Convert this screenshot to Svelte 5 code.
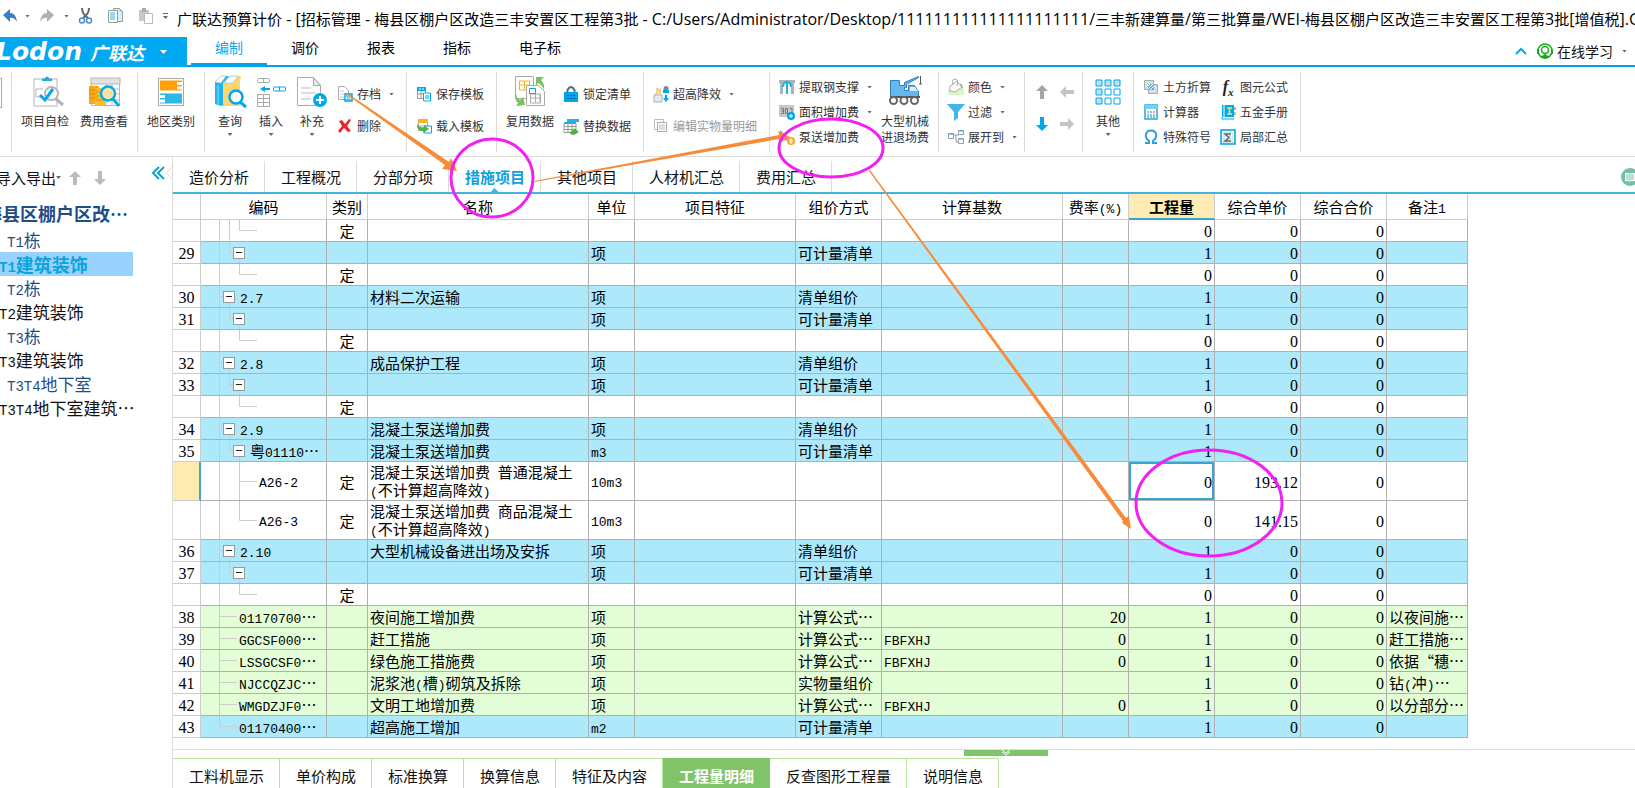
<script lang="ts">
	type Kind = 'white' | 'blue' | 'green';
	type Tree = 'section' | 'item' | 'leaf' | 'leafMore' | 'leafDeep' | 'flat' | 'flatEnd';

	interface Row {
		no?: number;
		tree: Tree;
		kind: Kind;
		cells: string[];
		tall?: boolean;
		current?: boolean;
	}

	const columns = [
		{ title: '', width: 28 },
		{ title: '编码', width: 126 },
		{ title: '类别', width: 41 },
		{ title: '名称', width: 221 },
		{ title: '单位', width: 46 },
		{ title: '项目特征', width: 161 },
		{ title: '组价方式', width: 86 },
		{ title: '计算基数', width: 181 },
		{ title: '费率(%)', width: 66 },
		{ title: '工程量', width: 86 },
		{ title: '综合单价', width: 86 },
		{ title: '综合合价', width: 86 },
		{ title: '备注1', width: 81 }
	];

	// code, type, name, unit, feature, method, base, rate, quantity, price, total, note
	const empty = ['', '定', '', '', '', '', '', '', '0', '0', '0', ''];
	const measured = ['', '', '', '项', '', '可计量清单', '', '', '1', '0', '0', ''];

	function section(code: string, name: string) {
		return [code, '', name, '项', '', '清单组价', '', '', '1', '0', '0', ''];
	}

	const rows: Row[] = [
		{ tree: 'leafDeep', kind: 'white', cells: empty },
		{ no: 29, tree: 'item', kind: 'blue', cells: measured },
		{ tree: 'leaf', kind: 'white', cells: empty },
		{ no: 30, tree: 'section', kind: 'blue', cells: section('2.7', '材料二次运输') },
		{ no: 31, tree: 'item', kind: 'blue', cells: measured },
		{ tree: 'leaf', kind: 'white', cells: empty },
		{ no: 32, tree: 'section', kind: 'blue', cells: section('2.8', '成品保护工程') },
		{ no: 33, tree: 'item', kind: 'blue', cells: measured },
		{ tree: 'leaf', kind: 'white', cells: empty },
		{ no: 34, tree: 'section', kind: 'blue', cells: section('2.9', '混凝土泵送增加费') },
		{
			no: 35,
			tree: 'item',
			kind: 'blue',
			cells: ['粤01110…', '', '混凝土泵送增加费', 'm3', '', '可计量清单', '', '', '1', '0', '0', '']
		},
		{
			tree: 'leafMore',
			kind: 'white',
			tall: true,
			current: true,
			cells: ['A26-2', '定', '混凝土泵送增加费 普通混凝土(不计算超高降效)', '10m3', '', '', '', '', '0', '193.12', '0', '']
		},
		{
			tree: 'leaf',
			kind: 'white',
			tall: true,
			cells: ['A26-3', '定', '混凝土泵送增加费 商品混凝土(不计算超高降效)', '10m3', '', '', '', '', '0', '141.15', '0', '']
		},
		{ no: 36, tree: 'section', kind: 'blue', cells: section('2.10', '大型机械设备进出场及安拆') },
		{ no: 37, tree: 'item', kind: 'blue', cells: measured },
		{ tree: 'leaf', kind: 'white', cells: empty },
		{
			no: 38,
			tree: 'flat',
			kind: 'green',
			cells: ['01170700…', '', '夜间施工增加费', '项', '', '计算公式…', '', '20', '1', '0', '0', '以夜间施…']
		},
		{
			no: 39,
			tree: 'flat',
			kind: 'green',
			cells: ['GGCSF000…', '', '赶工措施', '项', '', '计算公式…', 'FBFXHJ', '0', '1', '0', '0', '赶工措施…']
		},
		{
			no: 40,
			tree: 'flat',
			kind: 'green',
			cells: ['LSSGCSF0…', '', '绿色施工措施费', '项', '', '计算公式…', 'FBFXHJ', '0', '1', '0', '0', '依据“穗…']
		},
		{
			no: 41,
			tree: 'flat',
			kind: 'green',
			cells: ['NJCCQZJC…', '', '泥浆池(槽)砌筑及拆除', '项', '', '实物量组价', '', '', '1', '0', '0', '钻(冲)…']
		},
		{
			no: 42,
			tree: 'flat',
			kind: 'green',
			cells: ['WMGDZJF0…', '', '文明工地增加费', '项', '', '计算公式…', 'FBFXHJ', '0', '1', '0', '0', '以分部分…']
		},
		{
			no: 43,
			tree: 'flatEnd',
			kind: 'blue',
			cells: ['01170400…', '', '超高施工增加', 'm2', '', '可计量清单', '', '', '1', '0', '0', '']
		}
	];

	const title =
		'广联达预算计价 - [招标管理 - 梅县区棚户区改造三丰安置区工程第3批 - C:/Users/Administrator/Desktop/111111111111111111111/三丰新建算量/第三批算量/WEI-梅县区棚户区改造三丰安置区工程第3批[增值税].GB';
	const menu = ['编制', '调价', '报表', '指标', '电子标'];
	const views = ['造价分析', '工程概况', '分部分项', '措施项目', '其他项目', '人材机汇总', '费用汇总'];
	const details = ['工料机显示', '单价构成', '标准换算', '换算信息', '特征及内容', '工程量明细', '反查图形工程量', '说明信息'];
	const projects = [
		{ name: 'T1栋', building: true },
		{ name: 'T1建筑装饰', building: false },
		{ name: 'T2栋', building: true },
		{ name: 'T2建筑装饰', building: false },
		{ name: 'T3栋', building: true },
		{ name: 'T3建筑装饰', building: false },
		{ name: 'T3T4地下室', building: true },
		{ name: 'T3T4地下室建筑…', building: false }
	];

	let activeMenu = $state('编制');
	let activeView = $state('措施项目');
	let activeDetail = $state('工程量明细');
	let activeProject = $state('T1建筑装饰');

	// Splits a string in ASCII and Chinese runs, each with its own font
	function runs(text: string) {
		return text.match(/[\x20-\x7e]+|[^\x20-\x7e]+/g) ?? [];
	}

	function treePath(tree: Tree, height: number) {
		const mid = Math.floor(height / 2) + 0.5;
		const trunk = `M18.5 0V${height}`;
		switch (tree) {
			case 'section':
				return `${trunk}M18.5 ${mid}H22M28.5 ${mid}V${height}`;
			case 'item':
				return `${trunk}M28.5 0V${mid}H32M38.5 ${mid}V${height}`;
			case 'leaf':
				return `${trunk}M38.5 0V${mid}H56`;
			case 'leafMore':
				return `${trunk}M38.5 0V${height}M38.5 ${mid}H56`;
			case 'leafDeep':
				return `${trunk}M28.5 0V${height}M38.5 0V${mid}H56`;
			case 'flat':
				return `${trunk}M18.5 ${mid}H36`;
			default:
				return `M18.5 0V${mid}H36`;
		}
	}

	// 32px toolbar drawings
	const bigIcons: Record<string, string> = {
		check: `<rect x="5" y="4" width="23" height="27" fill="#fff" stroke="#b5b5b5"/><path d="M13 6V3.500h3a2 2 0 0 1 4 0h3V6z" fill="#2aa9df"/><path d="M14 14H7v8h5" fill="none" stroke="#b5b5b5"/><circle cx="22.500" cy="18.500" r="6.500" fill="#fff" stroke="#b5b5b5" stroke-width="2"/><path d="M27 24l7 6" stroke="#b5b5b5" stroke-width="3"/><path d="M11 20l5 5 8-11" fill="none" stroke="#00a8ec" stroke-width="3"/>`,
		fee: `<path d="M3.500 3.500h28v27h-28zM3.500 14h28M3.500 19h28M3.500 25h28M18 9v21M24 9v21" fill="#fff" stroke="#b8b8b8"/><rect x="3" y="3" width="29" height="6" fill="#e2e2e2" stroke="#b8b8b8"/><path d="M1 11h10v18H1z" fill="#f9a617"/><path d="M7 13h11v17H7z" fill="#fdbe33"/><path d="M1 15h8M1 19h8M1 23h8M8 17h10M8 21h10M8 25h10" stroke="#e48c00"/><circle cx="20" cy="18.500" r="7" fill="#fde3a1" stroke="#00adef" stroke-width="2.500"/><path d="M25 24l6 7" stroke="#00adef" stroke-width="3"/>`,
		region: `<rect x="3.500" y="3.500" width="25" height="27" fill="#fff" stroke="#aaa"/><path d="M5 5.500h22v10H5z" fill="#ff9f0a"/><path d="M5 18.500h22v10H5z" fill="#2cb7e5"/><path d="M22 7h5v3h-5zM22 11.500h5v3h-5zM5 20h5v3H5zM5 24.500h5v3H5z" fill="#fff"/>`,
		query: `<path d="M1 7l6-6h8l-4 6v23q-5 2-10-1z" fill="#1eb5e8"/><path d="M9 8l7-7h11l-1 6v24H12q-3 0-3-3z" fill="#fcd670"/><path d="M1 7l6-6h5L7 8zM10 8l6-7h8l-5 7z" fill="#fff" stroke="#b8cbd0"/><path d="M4 10v20" stroke="#8fe0f7"/><circle cx="22" cy="22" r="6.500" fill="#fff" stroke="#00a9ee" stroke-width="2.500"/><path d="M26 27l6 5" stroke="#00a9ee" stroke-width="3"/>`,
		insert: `<g fill="#fff" stroke="#aaa"><rect x="2.500" y="3.500" width="12" height="4" rx="1"/><path d="M8.500 4v4M2.500 19.500h12v12h-12zM2.500 23.500h12M2.500 27.500h12M8.500 19.500v12"/></g><path d="M5 14l5-3v2h5v2h-5v2z" fill="#00a8ec"/><rect x="18.500" y="12" width="12" height="4" rx="1" fill="#fff" stroke="#00a8ec"/><path d="M24.500 12v4" stroke="#00a8ec"/>`,
		add: `<path d="M1.500 2.500h16l7 8v20h-23z" fill="#fff" stroke="#aaa"/><path d="M17.500 2.500v8h7z" fill="#e9e9e9" stroke="#aaa"/><path d="M5 13h10M5 18h15M5 24h10" stroke="#ddd" stroke-width="2"/><circle cx="24" cy="25" r="7" fill="#00a9ee"/><path d="M20 25h8M24 21v8" stroke="#fff" stroke-width="2"/>`,
		reuse: `<path d="M1.500 1.500h18v22h-18z" fill="#fff" stroke="#aaa"/><path d="M5.500 6h10v9h-10zM5.500 10h10M10.500 6v9" fill="#fff" stroke="#f5b22c"/><path d="M12.500 10.500h12l6 6v14h-18z" fill="#fff" stroke="#aaa"/><path d="M16.500 19h10v9h-10zM16.500 23h10M21.500 15v13M26 19v9" fill="none" stroke="#aaa"/><path d="M15.500 13.500h6v5h-6z" fill="none" stroke="#00a8ec"/><path d="M22 2h8l-3 3q4 4 3 10-2-5-6-7l-2 3z" fill="#7bbf67"/><path d="M2 18q0 5 4 7l3-3 2 8-9 1 2-3q-4-3-2-10z" fill="#7bbf67"/>`,
		crane: `<path d="M1.500 5.500h9v5h5v-3l14-6v1l-12 7v3h-2v3h4v-5h6l4 6v5h-28z" fill="#66b8f0" stroke="#337fb9"/><path d="M31.500 1v8M30 9h3" stroke="#555" fill="none"/><path d="M21 12h5l3 4h-8z" fill="#d8effd"/><path d="M1 22h30" stroke="#555" stroke-width="2"/><g fill="#fff" stroke="#666" stroke-width="2"><circle cx="4.500" cy="25.500" r="3.500"/><circle cx="15" cy="25.500" r="3.500"/><circle cx="25.500" cy="25.500" r="3.500"/></g>`,
		others: `<g fill="#bfe0f2" stroke="#00a9ee"><path d="M4 5h6v6H4zM13 5h6v6h-6zM22 5h6v6h-6zM4 14h6v6H4zM4 23h6v6H4z"/></g><g fill="#fff" stroke="#00a9ee"><path d="M13 14h6v6h-6zM22 14h6v6h-6zM13 23h6v6h-6zM22 23h6v6h-6z"/></g>`
	};

	// 16px drawings
	const icons: Record<string, string> = {
		undo: `<path d="M3 7l7-6v4q6 0 7 9-3-5-7-4v4z" fill="#3c7fc0"/>`,
		redo: `<path d="M15 7L8 1v4q-6 0-7 9 3-5 7-4v4z" fill="#b0b0b0"/>`,
		cut: `<path d="M4 0q0 6 6 10M11 0q0 6-6 10" fill="none" stroke="#666" stroke-width="2"/><circle cx="4" cy="12.500" r="2.500" fill="none" stroke="#4a8ccd" stroke-width="1.500"/><circle cx="11" cy="12.500" r="2.500" fill="none" stroke="#4a8ccd" stroke-width="1.500"/>`,
		copy: `<path d="M5.500.500h6l3 3v10h-9z" fill="#d6f1fb" stroke="#999"/><path d="M11.500.500v3h3z" fill="#5cc8ec"/><path d="M.5 2.500h9v12h-9z" fill="#fff" stroke="#999"/><path d="M2 5h5M2 7h5M2 9h5M2 11h5" stroke="#2fb4e6"/>`,
		paste: `<path d="M1 2h10v11H1z" fill="#c9c9c9"/><path d="M4 0h4v4H4z" fill="#aaa"/><path d="M6.500 5.500h8v10h-8z" fill="#fff" stroke="#bbb"/>`,
		archive: `<path d="M1.500.5h6l4 4v9h-10z" fill="#fff" stroke="#aaa"/><path d="M3 5h4M3 8h5M3 11h4" stroke="#ccc"/><path d="M8 8h7v7H8z" fill="#fff" stroke="#00a8ec" stroke-width="1.500"/><path d="M10 8v3h4V8M10 15v-2h3v2" fill="none" stroke="#00a8ec"/>`,
		remove: `<path d="M2 3l3-1 3 4 4-5 2 1-4 6 4 5-3 1-4-4-4 5-2-2 4-5z" fill="#e8262a"/>`,
		saveTpl: `<path d="M1.500 1.500h8v11h-8zM1.500 8h8M5 4v8" fill="#fff" stroke="#999"/><path d="M1 1h9v4H1z" fill="#00a8ec"/><path d="M3 3h2M6 3h2" stroke="#fff"/><path d="M7.500 7h7v8h-7z" fill="#fff" stroke="#00a8ec"/><path d="M9 10h4M9 12h4" stroke="#00a8ec"/>`,
		loadTpl: `<path d="M2.500 1.500h9v11h-9zM2.500 8h9" fill="#fff" stroke="#aaa"/><path d="M2 1h10v4H2z" fill="#f8b32b"/><path d="M8.500 8h7v7h-7z" fill="#fff" stroke="#00a8ec"/><path d="M1 6q-1 7 6 7v2l6-4-5-4v2q-5 1-7-3z" fill="#55b33b"/>`,
		lock: `<path d="M4.500 7V4q3.500-6 7 0v3" fill="none" stroke="#4f6a7a" stroke-width="2"/><path d="M1 6h14v10H1z" fill="#00a4ea"/><path d="M4 9.500h2M7 9.500h2M10 9.500h2M4 12.500h2M7 12.500h2M10 12.500h2" stroke="#075f96"/>`,
		swap: `<path d="M1 5.500h12v9H1zM1 8.500h12M1 11.500h12M5 5v9M9 5v9" fill="#fff" stroke="#999"/><path d="M4 1h12v3H4zM1 4h12v2H1z" fill="#25b1df"/><path d="M7 16q0-4 4-4v-2l5 4-5 3z" fill="#4eb23f"/>`,
		height: `<path d="M1 9h8v7H1z" fill="#e3eeec" stroke="#9cb6b9"/><path d="M3 9V7h5M4 2v4M4 2l3 4V2" stroke="#f5a93c" fill="none"/><circle cx="13" cy="2.500" r="2.500" fill="#789"/><path d="M10 4h6v3h-6zM12 9h2v3h2l-3 4-3-4h2z" fill="#00a4ea"/>`,
		edit: `<path d="M1.500 1.500h9v10h-9z" fill="#fff" stroke="#bbb"/><path d="M4.500 4.500h9v9h-9z" fill="#fff" stroke="#aaa"/><path d="M6 7h6M6 9h6M6 11h6" stroke="#bbb"/>`,
		steel: `<path d="M0 1h16v3H0zM1 4h3v11H1zM12 4h3v11h-3z" fill="#aeb4b5"/><path d="M8 15V4M4 8q0-5 4-5t4 5" fill="none" stroke="#21b1e5" stroke-width="2"/>`,
		area: `<path d="M0 1h15v12H0z" fill="#c4c8ca"/><path d="M2 4.500h2.500v5H2M2 7h2M6.500 9.500v-5h2v5zM11 4.500h2v5" fill="none" stroke="#777"/><circle cx="12" cy="12" r="4" fill="#00a8ec"/><path d="M10 12h4M12 10v4" stroke="#fff"/>`,
		pump: `<path d="M1 1l9 8-3 3-6-4z" fill="#9ca3a7"/><path d="M1 7l4 3-3 3z" fill="#27afe1"/><circle cx="12" cy="12" r="4" fill="#f7a420"/><path d="M10 11h4M10 13h4M12 9v6" stroke="#fff"/>`,
		color: `<path d="M0 10h16v6H0z" fill="#d9f6c9"/><path d="M2 7l7-5 5 6-7 5-5-1z" fill="#fff" stroke="#aaa"/><path d="M5 6q-2-6 2-6t2 7" fill="none" stroke="#aaa"/><path d="M12 4q4 3 2 7z" fill="#6fc36a"/>`,
		filter: `<path d="M-1 0h18l-7 8v6l-4 3V8z" fill="#3db6e8"/>`,
		expand: `<path d="M5 6h6V3M8 6v7h3" fill="none" stroke="#999"/><g fill="#fff" stroke="#8ba1ab"><path d="M.5 4.500h5v5h-5zM10.500 1.500h5v4h-5zM10.500 9.500h5v5h-5z"/></g><path d="M1 5h4M11 2h4M11 10h4" stroke="#31aee0"/>`,
		earth: `<path d="M1.500 1.500h9v9h-9z" fill="#ddd" stroke="#aaa"/><path d="M5.500 5.500h9v9h-9z" fill="#ddd" stroke="#aaa"/><path d="M5 5h6v6H5z" fill="#4ab9d9"/><path d="M5 7l2-2M5 10l5-5M7 11l4-4" stroke="#fff"/>`,
		calc: `<path d="M2 1h12v14H2z" fill="#fff" stroke="#2aa6da" stroke-width="1.500"/><path d="M2 1h12v4H2z" fill="#7bd0ee"/><path d="M4 8h2M7 8h2M4 11h2M7 11h2M10 11h2M4 13h2M7 13h2M10 13h2" stroke="#2785b2"/><path d="M10 8h2" stroke="#e33"/>`,
		omega: `<path d="M2 14h4v-2q-4-3-3-7 1-3.500 5-3.500T13 5q1 4-3 7v2h4" fill="none" stroke="#2c9dd6" stroke-width="2"/>`,
		book: `<path d="M2 1h12v12H2z" fill="#00a8ec"/><path d="M2 13v2h12" fill="none" stroke="#00a8ec"/><path d="M4 1v12" stroke="#fff"/><path d="M7 4h5M9.500 4v6M7 10h5" stroke="#f5e552" stroke-width="1.500"/><path d="M15 3v3" stroke="#e33"/><path d="M15 8v3" stroke="#3a3"/>`,
		sum: `<path d="M1 1h14v14H1z" fill="#eef8fc" stroke="#00a0dc" stroke-width="1.500"/><path d="M3 4h10M3 7h10M3 10h10M3 13h10" stroke="#8fd3ec" stroke-dasharray="2 1"/><path d="M11 5H5l4 3.500L5 12h6" fill="none" stroke="#666" stroke-width="1.500"/>`,
		up: `<path d="M8 1l6 6h-4v8H6V7H2z"/>`,
		down: `<path d="M8 15l6-6h-4V1H6v8H2z"/>`,
		left: `<path d="M1 8l6-6v4h8v4H7v4z"/>`,
		right: `<path d="M15 8L9 2v4H1v4h8v4z"/>`,
		learn: `<circle cx="8" cy="8" r="7" fill="#fff" stroke="#19a919" stroke-width="1.500"/><circle cx="8" cy="7" r="3.500" fill="none" stroke="#19a919" stroke-width="1.500"/><path d="M0 6h2v5H0zM14 6h2v5h-2zM3 14l5-3 5 3-5 2z" fill="#19a919"/>`
	};
</script>

{#snippet glyph(name: string)}
	<svg width="16" height="16" viewBox="0 0 16 16" aria-hidden="true">
		{@html icons[name]}
	</svg>
{/snippet}

{#snippet big(name: string, label: string, caret = false)}
	<button class="big">
		<svg width="32" height="32" viewBox="0 0 32 32" aria-hidden="true">{@html bigIcons[name]}</svg>
		<span>{label}</span>
		{#if caret}<i class="caret"></i>{/if}
	</button>
{/snippet}

{#snippet small(name: string, label: string, caret = false, disabled = false)}
	<button class="small" {disabled}>
		{@render glyph(name)}
		<span>{label}</span>
		{#if caret}<i class="caret"></i>{/if}
	</button>
{/snippet}

{#snippet mixed(text: string)}
	{#each runs(text) as run}<span class:latin={run.charCodeAt(0) < 127}>{run}</span>{/each}
{/snippet}

<div class="app" lang="zh-CN">
	<header class="titlebar">
		<button aria-label="撤销">{@render glyph('undo')}</button>
		<button class="drop" aria-label="撤销列表"><i class="caret"></i></button>
		<button aria-label="恢复">{@render glyph('redo')}</button>
		<button class="drop" aria-label="恢复列表"><i class="caret"></i></button>
		<button aria-label="剪切">{@render glyph('cut')}</button>
		<button class="spaced" aria-label="复制">{@render glyph('copy')}</button>
		<button class="spaced" aria-label="粘贴">{@render glyph('paste')}</button>
		<button class="drop custom" aria-label="自定义"><i class="caret"></i></button>
		<h1>{@render mixed(title)}</h1>
	</header>

	<nav class="menubar">
		<button class="logo">
			<span class="brand">Lodon</span>
			<span class="brand-cn">广联达</span>
			<i class="caret"></i>
		</button>
		<div class="menu">
			{#each menu as item}
				<button class:active={activeMenu === item} onclick={() => (activeMenu = item)}>{item}</button>
			{/each}
		</div>
		<div class="help">
			<button aria-label="折叠功能区">
				<svg width="12" height="8" viewBox="0 0 12 8"><path d="M1 7l5-5 5 5" fill="none" stroke="#12a3e8" stroke-width="2" /></svg>
			</button>
			<button class="learn-btn">{@render glyph('learn')}<span>在线学习</span><i class="caret"></i></button>
		</div>
	</nav>

	<div class="ribbon">
		<div class="group cut-off"><span class="sheet"></span></div>
		<div class="group roomy">
			{@render big('check', '项目自检')}
			{@render big('fee', '费用查看')}
		</div>
		<div class="group">{@render big('region', '地区类别')}</div>
		<div class="group wide">
			{@render big('query', '查询', true)}
			{@render big('insert', '插入', true)}
			{@render big('add', '补充', true)}
			<div class="two">
				{@render small('archive', '存档', true)}
				{@render small('remove', '删除')}
			</div>
		</div>
		<div class="group wide">
			<div class="two">
				{@render small('saveTpl', '保存模板')}
				{@render small('loadTpl', '载入模板')}
			</div>
		</div>
		<div class="group wide">
			{@render big('reuse', '复用数据')}
			<div class="two">
				{@render small('lock', '锁定清单')}
				{@render small('swap', '替换数据')}
			</div>
		</div>
		<div class="group wide">
			<div class="two">
				{@render small('height', '超高降效', true)}
				{@render small('edit', '编辑实物量明细', false, true)}
			</div>
		</div>
		<div class="group">
			<div class="three">
				{@render small('steel', '提取钢支撑', true)}
				{@render small('area', '面积增加费', true)}
				{@render small('pump', '泵送增加费')}
			</div>
			{@render big('crane', '大型机械进退场费')}
		</div>
		<div class="group tight">
			<div class="three">
				{@render small('color', '颜色', true)}
				{@render small('filter', '过滤', true)}
				{@render small('expand', '展开到', true)}
			</div>
		</div>
		<div class="group tight">
			<div class="arrows">
				<button aria-label="上移">{@render glyph('up')}</button>
				<button class="pale" aria-label="升级">{@render glyph('left')}</button>
				<button class="bright" aria-label="下移">{@render glyph('down')}</button>
				<button class="pale" aria-label="降级">{@render glyph('right')}</button>
			</div>
		</div>
		<div class="group">{@render big('others', '其他', true)}</div>
		<div class="group wide">
			<div class="three">
				{@render small('earth', '土方折算')}
				{@render small('calc', '计算器')}
				{@render small('omega', '特殊符号')}
			</div>
			<div class="three">
				<button class="small"><em class="fx">f<sub>x</sub></em><span>图元公式</span></button>
				{@render small('book', '五金手册')}
				{@render small('sum', '局部汇总')}
			</div>
		</div>
	</div>

	<div class="body">
		<aside>
			<div class="tools">
				<button class="transfer">导入导出<i class="caret"></i></button>
				<button aria-label="上移">{@render glyph('up')}</button>
				<button aria-label="下移">{@render glyph('down')}</button>
				<button class="fold" aria-label="收起">
					<svg width="20" height="14" viewBox="0 0 20 14">
						<path d="M7 1L1 7l6 6M12 1L6 7l6 6" fill="none" stroke="#0ba5cf" stroke-width="2" />
						<path d="M20 1l-6 6 6 6" fill="none" stroke="#ddd" />
					</svg>
				</button>
			</div>
			<div class="tree">
				<h2>梅县区棚户区改…</h2>
				{#each projects as project}
					<button
						class:building={project.building}
						class:active={activeProject === project.name}
						onclick={() => (activeProject = project.name)}
					>
						{@render mixed(project.name)}
					</button>
				{/each}
			</div>
		</aside>

		<main>
			<nav class="views">
				{#each views as view}
					<button class:active={activeView === view} onclick={() => (activeView = view)}>{view}</button>
				{/each}
				<button class="guide" aria-label="说明">
					<svg width="18" height="18" viewBox="0 0 18 18">
						<circle cx="9" cy="9" r="9" fill="#72c2aa" />
						<path d="M4 5h4l1 1 1-1h4v8h-4l-1 1-1-1H4z" fill="#fff" />
						<path d="M5 7h3M5 9h3M5 11h3M10 7h3M10 9h3M10 11h3M9 6v7" stroke="#72c2aa" />
					</svg>
				</button>
			</nav>

			<table>
				<colgroup>
					{#each columns as column}<col style:width="{column.width}px" />{/each}
				</colgroup>
				<thead>
					<tr>
						{#each columns as column}
							<th class:sorted={column.title === '工程量'}>{@render mixed(column.title)}</th>
						{/each}
					</tr>
				</thead>
				<tbody>
					{#each rows as row}
						{@const height = row.tall ? 38 : 21}
						<tr class={row.kind} class:tall={row.tall} class:current={row.current}>
							<td class="no">{row.no ?? ''}</td>
							{#each row.cells as cell, i}
								{#if i === 0}
									<td class="code">
										<div class="node {row.tree}">
											<svg class="lines" width="60" {height}>
												<path d={treePath(row.tree, height)} fill="none" stroke="#ccc" />
											</svg>
											{#if row.tree === 'section' || row.tree === 'item'}
												<button class="toggle" aria-label="折叠"></button>
											{/if}
											<span class="label">{@render mixed(cell)}</span>
										</div>
									</td>
								{:else if i >= 7 && i <= 10}
									<td class="num" class:focus={row.current && i === 8}>{cell}</td>
								{:else}
									<td class:center={i === 1} class:name={i === 2}>{@render mixed(cell)}</td>
								{/if}
							{/each}
						</tr>
					{/each}
				</tbody>
			</table>

			<div class="splitter">
				<button aria-label="展开明细">
					<svg width="10" height="6" viewBox="0 0 10 6"><path d="M1 0l4 3 4-3M1 2l4 3 4-3" fill="none" stroke="#fff" /></svg>
				</button>
			</div>

			<nav class="details">
				{#each details as detail}
					<button class:active={activeDetail === detail} onclick={() => (activeDetail = detail)}>{detail}</button>
				{/each}
			</nav>
		</main>
	</div>

	<svg class="marks" width="1300" height="600" aria-hidden="true">
		<g fill="#f98b38">
			<path d="M346 94l1-1 102 69 2-4 6 13-15-2 3-4z" />
			<path d="M534 182v-1l245-46-1-4 12 6-11 6v-4z" />
			<path d="M869 171l1-1 256 348 3-2 2 13-9-6 1-2z" />
		</g>
		<g fill="none" stroke="#f31ff3" stroke-width="3">
			<ellipse cx="492" cy="178" rx="41" ry="39" />
			<ellipse cx="831" cy="148" rx="52" ry="29" />
			<ellipse cx="1209" cy="503" rx="73" ry="53" />
		</g>
	</svg>
</div>

<style>
	:global(body) {
		margin: 0;
		background: #fff;
		overflow: hidden;
	}

	.app {
		position: relative;
		min-height: 100vh;
		display: flex;
		flex-direction: column;
		overflow: hidden;
		font-family: 'Noto Sans CJK SC', sans-serif;
		font-size: 12px;
		color: #111;
	}

	button {
		margin: 0;
		padding: 0;
		border: 0;
		background: none;
		font: inherit;
		color: inherit;
		flex: none;
		cursor: pointer;
	}

	svg {
		display: block;
		flex: none;
		overflow: visible;
	}

	.caret {
		display: block;
		flex: none;
		width: 5px;
		height: 3px;
		background: #667;
		clip-path: polygon(0 0, 100% 0, 50% 100%);
	}

	.latin {
		font-family: 'Liberation Mono', monospace;
		font-size: 13px;
		line-height: 1;
	}

	/* title bar */
	.titlebar {
		display: flex;
		gap: 9px;
		height: 37px;
		white-space: nowrap;
	}

	.titlebar button {
		height: 32px;
		display: flex;
		align-items: center;
	}

	.titlebar .spaced {
		margin-left: 5px;
	}

	.titlebar .custom {
		flex-direction: column;
		justify-content: center;
		gap: 2px;
	}

	.custom::before {
		content: '';
		width: 5px;
		height: 1px;
		background: #667;
	}

	h1 {
		margin: 0;
		font-size: 15px;
		font-weight: 400;
		line-height: 37px;
		color: #000;
	}

	h1 .latin {
		font-family: 'Open Sans', sans-serif;
		font-size: 16px;
	}

	/* menu bar */
	.menubar {
		display: flex;
		height: 28px;
		border-bottom: 2px solid #00a4ee;
	}

	.logo {
		width: 187px;
		height: 30px;
		display: flex;
		align-items: center;
		background: #00a9f1;
		color: #fff;
		line-height: 28px;
	}

	.brand {
		margin-left: -4px;
		width: 94px;
		text-align: left;
		font: italic 700 25px/28px 'DejaVu Sans', sans-serif;
	}

	.brand-cn {
		width: 70px;
		text-align: left;
		font-size: 18px;
		font-weight: 700;
		font-style: italic;
	}

	.logo .caret {
		width: 7px;
		height: 4px;
		background: #fff;
	}

	.menu {
		display: flex;
		flex: 1;
		margin-left: 4px;
		font-size: 14px;
	}

	.menu button {
		padding: 0 24px 6px;
		line-height: 20px;
		border-bottom: 2px solid transparent;
		color: #000;
	}

	.menu .active {
		color: #12a3e8;
		border-color: #00a4ee;
	}

	.help {
		display: flex;
		align-items: center;
		gap: 10px;
		padding-right: 8px;
		font-size: 14px;
	}

	.learn-btn {
		display: flex;
		align-items: center;
		gap: 4px;
		line-height: 20px;
	}

	.learn-btn .caret {
		margin-left: 5px;
	}

	/* ribbon */
	.ribbon {
		display: flex;
		padding: 5px 0 4px;
		border-bottom: 1px solid #ddd;
		color: #333;
	}

	.group {
		display: flex;
		flex: none;
		align-items: flex-start;
		gap: 9px;
		height: 80px;
		padding: 0 9px;
		border-right: 1px solid #ddd;
	}

	.roomy {
		gap: 11px;
	}

	.wide {
		padding-right: 12px;
	}

	.tight {
		padding-right: 7px;
	}

	.cut-off {
		width: 11px;
		padding: 0;
	}

	.sheet {
		width: 1px;
		height: 28px;
		margin-top: 6px;
		border: 1px solid #aaa;
		border-left: 0;
	}

	.big {
		display: flex;
		flex-direction: column;
		align-items: center;
		min-width: 32px;
		max-width: 48px;
		padding-top: 3px;
		line-height: 16px;
	}

	.big span {
		margin: 6px 0 4px;
	}

	.small {
		display: flex;
		align-items: center;
		gap: 4px;
		height: 16px;
		line-height: 16px;
		white-space: nowrap;
	}

	.small .caret {
		margin-left: 4px;
	}

	.small:disabled {
		color: #999;
	}

	.two,
	.three {
		display: flex;
		flex-direction: column;
		align-items: flex-start;
	}

	.two {
		padding-top: 14px;
		gap: 16px;
	}

	.three {
		padding-top: 7px;
		gap: 9px;
	}

	.fx {
		width: 16px;
		font: italic 700 16px/16px 'Liberation Serif', serif;
		color: #222;
	}

	.fx sub {
		font-size: 11px;
		line-height: 1px;
	}

	.arrows {
		display: grid;
		grid-template-columns: 16px 16px;
		gap: 16px 9px;
		padding-top: 12px;
		fill: #a4a4a4;
	}

	.arrows .pale {
		fill: #c4c4c4;
	}

	.arrows .bright {
		fill: #00a9ee;
	}

	/* project tree */
	.body {
		display: flex;
		flex: 1;
	}

	aside {
		width: 172px;
		flex: none;
		overflow: hidden;
	}

	.tools {
		display: flex;
		align-items: center;
		gap: 9px;
		height: 41px;
		margin-left: -4px;
		fill: #bbb;
	}

	.transfer {
		display: flex;
		align-items: center;
		margin-right: -3px;
		font-size: 15px;
	}

	.fold {
		margin: 0 0 10px auto;
	}

	.tree {
		display: flex;
		flex-direction: column;
		margin: 0 39px 0 -12px;
		font-size: 17px;
		line-height: 24px;
		white-space: nowrap;
	}

	.tree h2 {
		margin: 0 0 0 -4px;
		font-size: 18px;
		line-height: 30px;
		color: #1f4e87;
	}

	.tree button {
		height: 24px;
		padding-left: 11px;
		text-align: left;
	}

	.tree .building {
		padding-left: 19px;
		color: #1f4e87;
	}

	.tree .active {
		background: #99d1ff;
		color: #0ba3dc;
		font-size: 18px;
		font-weight: 700;
	}

	.tree .latin {
		font-size: 14px;
	}

	/* view tabs */
	main {
		flex: 1;
		min-width: 0;
		display: flex;
		flex-direction: column;
		border-left: 1px solid #ddd;
	}

	.views {
		display: flex;
		height: 31px;
		padding-top: 4px;
		border-bottom: 2px solid #41b4e2;
		font-size: 15px;
		overflow: hidden;
	}

	.views button {
		position: relative;
		padding: 0 15px 0 16px;
		border-right: 1px solid #ddd;
	}

	.views .active {
		color: #129fdc;
		font-weight: 700;
	}

	.views .active::after {
		content: '';
		position: absolute;
		left: 50%;
		bottom: 0;
		width: 8px;
		height: 4px;
		margin-left: -4px;
		background: #41b4e2;
		clip-path: polygon(50% 0, 100% 100%, 0 100%);
	}

	.views .guide {
		margin: 0 -4px 0 auto;
		padding: 0;
		border: 0;
	}

	/* grid */
	table {
		width: 1295px;
		table-layout: fixed;
		border-spacing: 0;
		font-size: 15px;
		line-height: 17px;
		color: #000;
	}

	th,
	td {
		box-sizing: border-box;
		padding: 0 2px;
		border-right: 1px solid #b0b0b0;
		border-bottom: 1px solid #b0b0b0;
		overflow: hidden;
		white-space: nowrap;
	}

	th {
		height: 26px;
		border-color: #ccc;
		font-weight: 400;
	}

	.sorted {
		background: #ffecb4;
		border-bottom: 2px solid #3aa5d1;
		font-weight: 700;
	}

	td {
		height: 22px;
	}

	.tall td {
		height: 39px;
	}

	.blue td {
		background: #ade8fb;
	}

	.green td {
		background: #e3fed6;
	}

	tr .no {
		background: #fff;
		border-color: #ccc;
	}

	.no,
	.num {
		font-family: 'Liberation Serif', serif;
		font-size: 16px;
		padding-top: 2px;
	}

	.no,
	.center {
		text-align: center;
	}

	.num {
		text-align: right;
	}

	.name {
		white-space: normal;
	}

	.current .no {
		background: #ffeab0;
		border-right: 2px solid #3aa5d1;
	}

	.current .focus {
		box-shadow: inset 0 0 0 2px #3aa5d1;
	}

	td.code {
		padding: 0;
	}

	.node {
		position: relative;
		display: flex;
		align-items: center;
		height: 21px;
	}

	.tall .node {
		height: 38px;
	}

	.lines {
		position: absolute;
		left: 0;
		top: 0;
	}

	.toggle {
		position: relative;
		width: 12px;
		height: 12px;
		margin-left: 22px;
		border: 1px solid #999;
		background: linear-gradient(#222, #222) center / 6px 1px no-repeat #fff;
	}

	.item .toggle {
		margin-left: 32px;
	}

	.section .label,
	.item .label {
		margin-left: 5px;
	}

	.flat .label,
	.flatEnd .label {
		margin-left: 38px;
	}

	.leaf .label,
	.leafMore .label {
		margin-left: 58px;
	}

	/* details */
	.splitter {
		display: flex;
		height: 8px;
		margin-top: 11px;
		padding-left: 791px;
		border-top: 1px solid #ddd;
	}

	.splitter button {
		display: flex;
		justify-content: center;
		width: 84px;
		height: 6px;
		background: #80c46a;
	}

	.details {
		display: flex;
		flex: 1;
		font-size: 15px;
		line-height: 34px;
	}

	.details button {
		height: 30px;
		padding: 0 15px 0 16px;
		border-top: 1px solid #b4e69e;
		border-right: 1px solid #b4e69e;
		overflow: hidden;
	}

	.details .active {
		background: #80c46a;
		border-color: #80c46a;
		color: #fff;
		font-weight: 700;
	}

	.marks {
		position: absolute;
		left: 0;
		top: 0;
		pointer-events: none;
	}
</style>
